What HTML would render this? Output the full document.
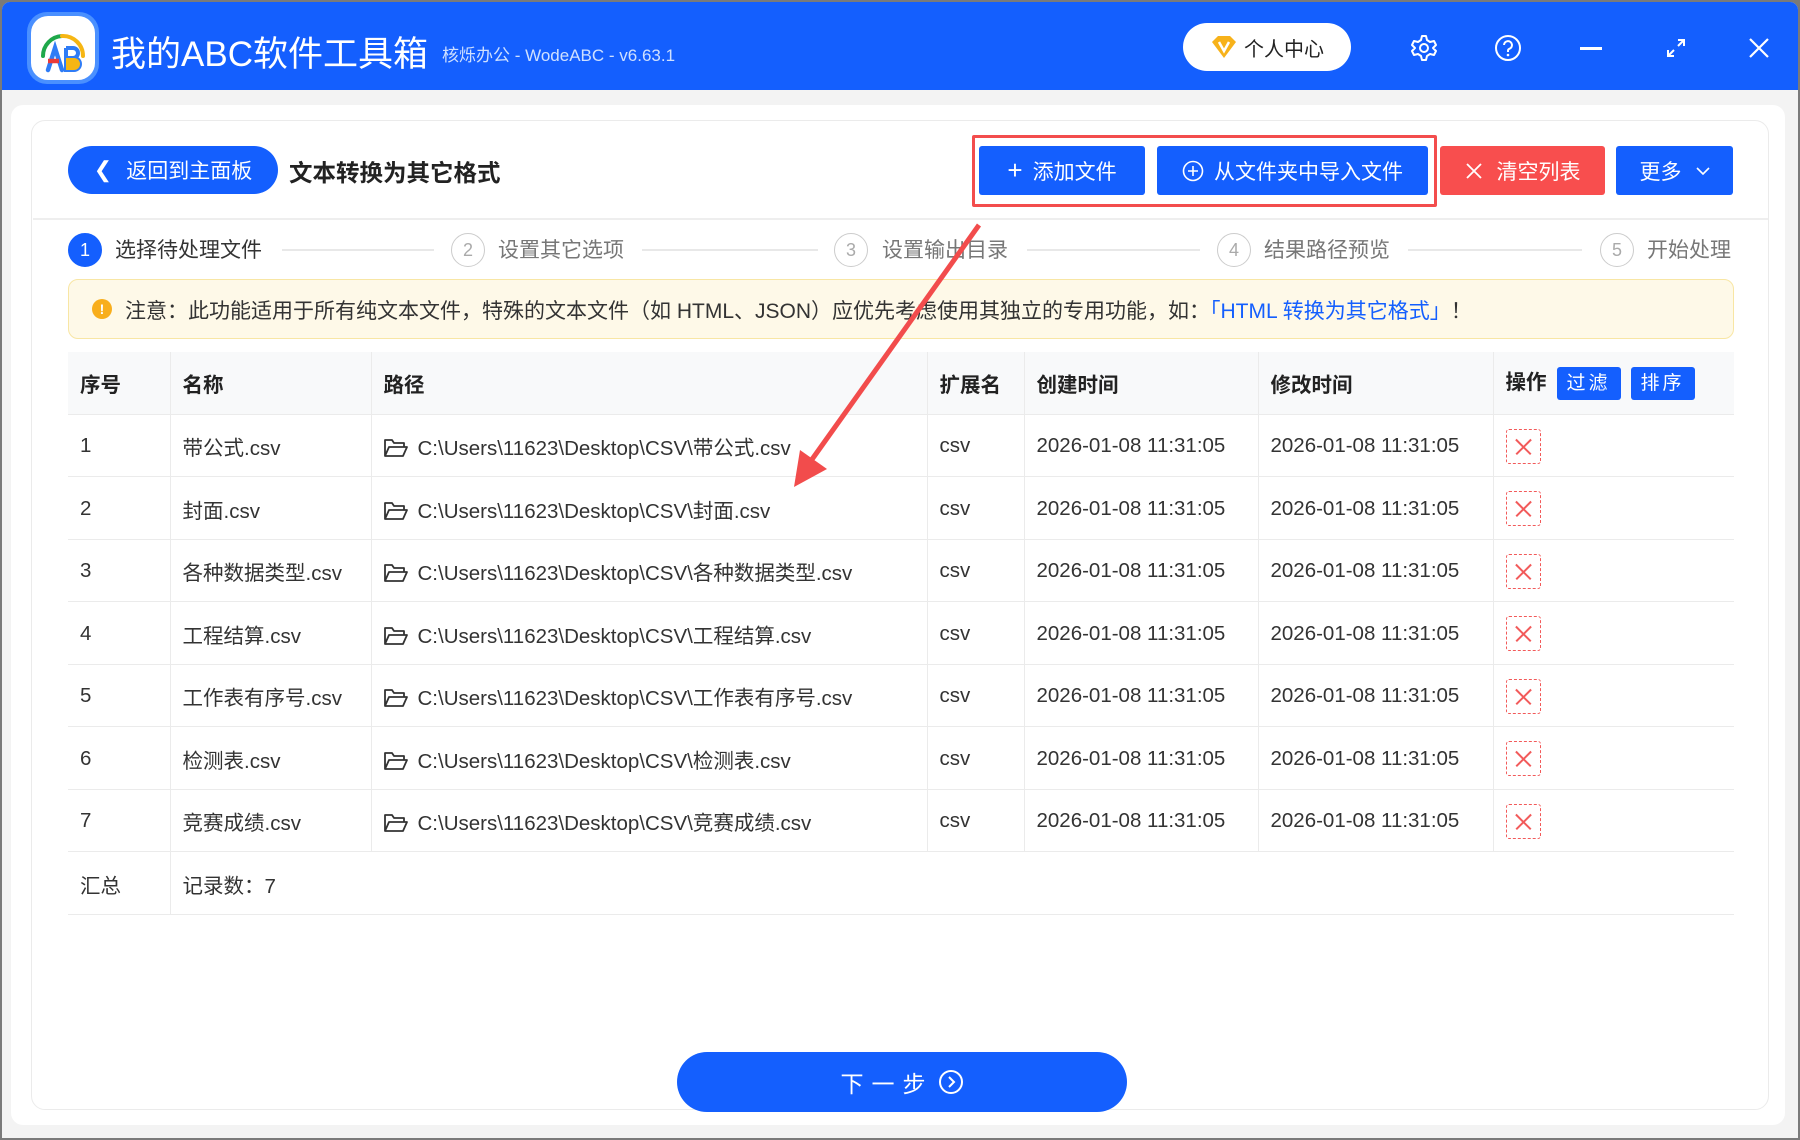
<!DOCTYPE html>
<html><head><meta charset="utf-8"><style>
*{margin:0;padding:0;box-sizing:border-box}
body{width:1800px;height:1140px;overflow:hidden;background:#7a7a7a;font-family:"Liberation Sans","Noto Sans CJK SC",sans-serif;position:relative}
.win{position:absolute;left:2px;top:2px;width:1796px;height:1136px;background:#f3f3f3;border-radius:8px 8px 0 0;overflow:hidden}
.hdr{position:absolute;left:0;top:0;width:100%;height:88px;background:#145ffe}
.abs{position:absolute}
.outer{position:absolute;left:9px;top:103px;width:1774px;height:1020px;background:#fff;border-radius:12px}
.card{position:absolute;left:29px;top:118px;width:1738px;height:990px;border:1.5px solid #ebebeb;border-radius:14px;background:#fff}
.btn{position:absolute;color:#fff;font-size:21px;display:flex;align-items:center;justify-content:center;border-radius:3px}
.blue{background:#145ffe}
.step{position:absolute;top:231px;width:34px;height:34px;border-radius:50%;border:1.5px solid #ccc;color:#aaa;font-size:18px;display:flex;align-items:center;justify-content:center}
.stxt{position:absolute;top:232px;font-size:21px;color:#777}
.sline{position:absolute;top:247px;height:1.5px;background:#e8e8e8}
table{position:absolute;left:66px;top:350px;width:1666px;border-collapse:collapse;font-size:20.5px;color:#333}
td,th{border-bottom:1.5px solid #ebebeb;border-right:1.5px solid #ebebeb;text-align:left;padding:0 0 0 12px;height:62.5px;font-weight:normal;white-space:nowrap;vertical-align:middle}
td{padding-top:2px}
th{background:#f8f9fa;font-weight:bold;height:62px;color:#222}
td:last-child,th:last-child{border-right:none}
.x{display:inline-block;width:35px;height:35px;border:1.5px dashed #f25a5a;border-radius:3px;position:relative;vertical-align:middle}
.x:before,.x:after{content:"";position:absolute;left:6px;top:16px;width:21px;height:1.5px;background:#f25a5a;transform:rotate(45deg)}
.x:after{transform:rotate(-45deg)}
.fold{display:inline-block;vertical-align:-3px;margin-right:10px}
.tb{display:inline-block;background:#145ffe;color:#fff;font-size:19px;font-weight:normal;padding:0;width:64px;height:33px;line-height:33px;text-align:center;border-radius:3px;margin-left:10px;letter-spacing:3px}
</style></head><body>
<div class="win">
<div class="hdr">
 <div class="abs" style="left:25px;top:10px;width:72px;height:72px;border-radius:20px;background:#4a90ff"></div>
 <div class="abs" style="left:29px;top:14px;width:64px;height:64px;border-radius:17px;background:#fff">
  <svg width="64" height="64" viewBox="0 0 64 64"><path d="M12 40 A20 20 0 0 1 31 20" stroke="#1fa84a" stroke-width="4" fill="none" stroke-linecap="round"/><path d="M31 20 A20 20 0 0 1 52 40" stroke="#f6b613" stroke-width="4" fill="none" stroke-linecap="round"/><path d="M17 54 L24 32 L31 54" stroke="#2f7cf6" stroke-width="4.5" fill="none" stroke-linecap="round"/><path d="M17 45 H28" stroke="#e93a3a" stroke-width="4.5"/><path d="M35 32 H42 a5 5 0 0 1 0 10 H35 M35 42 H43 a6 6 0 0 1 0 12 H35 Z M35 32 V54" stroke="#2f7cf6" stroke-width="4" fill="none"/><path d="M35 42 H43 a6 6 0 0 1 0 12 H35 Z" fill="#f6b613"/></svg>
 </div>
 <div class="abs" style="left:109px;top:24px;font-size:35px;color:#fff">我的ABC软件工具箱</div>
 <div class="abs" style="left:440px;top:39px;font-size:17px;color:#cfe0ff">核烁办公 - WodeABC - v6.63.1</div>
 <div class="abs" style="left:1181px;top:21px;width:168px;height:48px;border-radius:24px;background:#fff;display:flex;align-items:center;justify-content:center;font-size:20px;color:#222">
  <svg width="28" height="26" viewBox="0 0 28 26" style="margin-right:6px"><path d="M2 8 L8 2 H20 L26 8 L14 24 Z" fill="#f7b21a"/><path d="M9 8 L14 17 L19 8" stroke="#fff" stroke-width="2.5" fill="none"/></svg>个人中心</div>
 <svg class="abs" style="left:1408px;top:32px" width="28" height="28" viewBox="0 0 28 28"><circle cx="14" cy="14" r="4" stroke="#fff" stroke-width="2" fill="none"/><path d="M12 2h4l1 4 3 2 4-1 2 4-3 3v0l3 3-2 4-4-1-3 2-1 4h-4l-1-4-3-2-4 1-2-4 3-3-3-3 2-4 4 1 3-2z" stroke="#fff" stroke-width="2" fill="none" stroke-linejoin="round"/></svg>
 <svg class="abs" style="left:1492px;top:32px" width="28" height="28" viewBox="0 0 28 28"><circle cx="14" cy="14" r="12" stroke="#fff" stroke-width="2" fill="none"/><path d="M10 11a4 4 0 1 1 5 4c-1 .5-1 1-1 3" stroke="#fff" stroke-width="2" fill="none"/><circle cx="14" cy="21" r="1.3" fill="#fff"/></svg>
 <div class="abs" style="left:1578px;top:45px;width:22px;height:2.5px;background:#fff"></div>
 <svg class="abs" style="left:1662px;top:34px" width="24" height="24" viewBox="0 0 24 24"><path d="M14 4h6v6M20 4l-6 6M10 20H4v-6M4 20l6-6" stroke="#fff" stroke-width="2" fill="none"/></svg>
 <svg class="abs" style="left:1746px;top:35px" width="22" height="22" viewBox="0 0 22 22"><path d="M2 2L20 20M20 2L2 20" stroke="#fff" stroke-width="2.2"/></svg>
</div>
<div class="outer"></div>
<div class="card"></div>
<div class="btn blue" style="left:66px;top:144px;width:210px;height:48px;border-radius:24px;font-size:21px"><span style="font-size:22px;margin-right:14px">&#10094;</span>返回到主面板</div>
<div class="abs" style="left:287px;top:152px;font-size:23.5px;font-weight:bold;color:#222">文本转换为其它格式</div>
<div class="abs" style="left:970px;top:133px;width:465px;height:72px;border:3.5px solid #f34d4d;border-radius:2px"></div>
<div class="btn blue" style="left:977px;top:144px;width:166px;height:49px"><span style="font-size:26px;margin-right:10px;font-weight:200">+</span>添加文件</div>
<div class="btn blue" style="left:1155px;top:144px;width:271px;height:49px"><svg width="22" height="22" viewBox="0 0 22 22" style="margin-right:10px"><circle cx="11" cy="11" r="9.5" stroke="#fff" stroke-width="1.6" fill="none"/><path d="M11 6v10M6 11h10" stroke="#fff" stroke-width="1.6"/></svg>从文件夹中导入文件</div>
<div class="btn" style="left:1438px;top:144px;width:165px;height:49px;background:#f84e4e"><svg width="18" height="18" viewBox="0 0 18 18" style="margin-right:14px"><path d="M2 2L16 16M16 2L2 16" stroke="#fff" stroke-width="1.8"/></svg>清空列表</div>
<div class="btn blue" style="left:1614px;top:144px;width:117px;height:49px">更多<svg width="14" height="10" viewBox="0 0 14 10" style="margin-left:14px"><path d="M1 2l6 6 6-6" stroke="#fff" stroke-width="1.6" fill="none"/></svg></div>
<div class="abs" style="left:31px;top:216px;width:1735px;height:1.5px;background:#eee"></div>
<div class="step" style="left:66px;background:#145ffe;border-color:#145ffe;color:#fff">1</div><div class="stxt" style="left:113px;color:#333">选择待处理文件</div>
<div class="sline" style="left:280px;width:152px"></div>
<div class="step" style="left:449px">2</div><div class="stxt" style="left:496px">设置其它选项</div>
<div class="sline" style="left:640px;width:176px"></div>
<div class="step" style="left:832px">3</div><div class="stxt" style="left:880px">设置输出目录</div>
<div class="sline" style="left:1025px;width:173px"></div>
<div class="step" style="left:1215px">4</div><div class="stxt" style="left:1262px">结果路径预览</div>
<div class="sline" style="left:1406px;width:174px"></div>
<div class="step" style="left:1598px">5</div><div class="stxt" style="left:1645px">开始处理</div>
<div class="abs" style="left:66px;top:277px;width:1666px;height:60px;background:#fef9e8;border:1.5px solid #f8e6a4;border-radius:10px"></div>
<div class="abs" style="left:90px;top:297px;width:20px;height:20px;border-radius:50%;background:#f8ae1c;color:#fff;font-size:14px;font-weight:bold;text-align:center;line-height:20px">!</div>
<div class="abs" style="left:123px;top:293px;font-size:21px;color:#333;white-space:nowrap">注意：此功能适用于所有纯文本文件，特殊的文本文件（如 HTML、JSON）应优先考虑使用其独立的专用功能，如：<span style="color:#145ffe">「HTML 转换为其它格式」</span>！</div>
<table>
<colgroup><col style="width:102px"><col style="width:201px"><col style="width:556px"><col style="width:97px"><col style="width:234px"><col style="width:235px"><col></colgroup>
<tr><th>序号</th><th>名称</th><th>路径</th><th>扩展名</th><th>创建时间</th><th>修改时间</th><th>操作<span class="tb">过滤</span><span class="tb">排序</span></th></tr>
</table>
<table style="top:412px" id="t"></table>
<svg class="abs" style="left:0;top:0" width="1800" height="1140"><path d="M977 223 L806 463" stroke="#f24c4c" stroke-width="5"/><path d="M792 485 L798 448 L825 467 Z" fill="#f24c4c"/></svg>
<div class="btn blue" style="left:675px;top:1050px;width:450px;height:60px;border-radius:30px;font-size:23px;letter-spacing:8px">下一步<svg width="26" height="26" viewBox="0 0 26 26" style="margin-left:4px"><circle cx="13" cy="13" r="11" stroke="#fff" stroke-width="2" fill="none"/><path d="M11 8l5 5-5 5" stroke="#fff" stroke-width="2" fill="none"/></svg></div>
</div>
<script>
var n=["带公式","封面","各种数据类型","工程结算","工作表有序号","检测表","竞赛成绩"],h="<colgroup><col style='width:102px'><col style='width:201px'><col style='width:556px'><col style='width:97px'><col style='width:234px'><col style='width:235px'><col></colgroup>";
var f='<svg class="fold" width="24" height="20" viewBox="0 0 24 20"><path d="M1 18V2h7l2 3h10v4M1 18l4-9h18l-4 9z" stroke="#333" stroke-width="1.8" fill="none" stroke-linejoin="round"/></svg>';
n.forEach(function(s,i){h+="<tr><td>"+(i+1)+"</td><td>"+s+".csv</td><td>"+f+"C:\\Users\\11623\\Desktop\\CSV\\"+s+".csv</td><td>csv</td><td>2026-01-08 11:31:05</td><td>2026-01-08 11:31:05</td><td><span class='x'></span></td></tr>";});
h+="<tr><td style='height:58px'>汇总</td><td colspan='6' style='border-right:none'>记录数：7</td></tr>";
document.getElementById("t").innerHTML=h;
</script>
</body></html>
